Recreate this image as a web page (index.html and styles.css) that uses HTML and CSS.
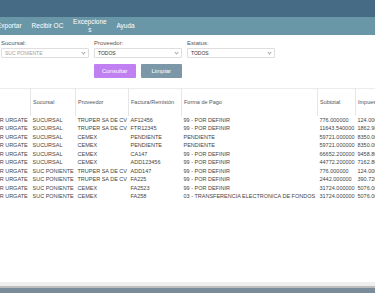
FILE: index.html
```html
<!DOCTYPE html>
<html lang="es">
<head>
    <meta charset="UTF-8">
    <meta name="viewport" content="width=device-width, initial-scale=1.0">
    <title>Facturas</title>
    <link rel="stylesheet" href="styles.css">
</head>
<body>
    <header class="top-bar"></header>
    <nav class="menu">
        <ul>
            <li>Exportar</li>
            <li>Recibir OC</li>
            <li class="narrow">Excepciones</li>
            <li>Ayuda</li>
        </ul>
    </nav>

    <main class="content">
        <div class="filters">
            <div class="filter-col">
                <label>Sucursal:</label>
                <div class="select disabled">SUC PONIENTE</div>
            </div>
            <div class="filter-col">
                <label>Proveedor:</label>
                <div class="select">TODOS</div>
            </div>
            <div class="filter-col">
                <label>Estatus:</label>
                <div class="select">TODOS</div>
            </div>
            <div class="actions">
                <button type="button" class="btn btn-primary">Consultar</button>
                <button type="button" class="btn btn-secondary">Limpiar</button>
            </div>
        </div>

        <div class="table-wrap">
            <table class="grid">
                <colgroup>
                    <col class="c-user">
                    <col class="c-suc">
                    <col class="c-prov">
                    <col class="c-fact">
                    <col class="c-pago">
                    <col class="c-sub">
                    <col class="c-imp">
                </colgroup>
                <thead>
                    <tr>
                        <th>Usuario</th>
                        <th>Sucursal</th>
                        <th>Proveedor</th>
                        <th>Factura/Remisión</th>
                        <th>Forma de Pago</th>
                        <th>Subtotal</th>
                        <th>Impuesto</th>
                    </tr>
                </thead>
                <tbody>
                    <tr><td>PROVEEDOR URGATE</td><td>SUCURSAL</td><td>TRUPER SA DE CV</td><td>AF12456</td><td>99 - POR DEFINIR</td><td>776.000000</td><td>124.000000</td></tr>
                    <tr><td>PROVEEDOR URGATE</td><td>SUCURSAL</td><td>TRUPER SA DE CV</td><td>FTR12345</td><td>99 - POR DEFINIR</td><td>11643.540000</td><td>1862.966400</td></tr>
                    <tr><td>PROVEEDOR URGATE</td><td>SUCURSAL</td><td>CEMEX</td><td>PENDIENTE</td><td>PENDIENTE</td><td>59721.000000</td><td>8350.000000</td></tr>
                    <tr><td>PROVEEDOR URGATE</td><td>SUCURSAL</td><td>CEMEX</td><td>PENDIENTE</td><td>PENDIENTE</td><td>59721.000000</td><td>8350.000000</td></tr>
                    <tr><td>PROVEEDOR URGATE</td><td>SUCURSAL</td><td>CEMEX</td><td>CA147</td><td>99 - POR DEFINIR</td><td>66652.200000</td><td>9458.800000</td></tr>
                    <tr><td>PROVEEDOR URGATE</td><td>SUCURSAL</td><td>CEMEX</td><td>ADD123456</td><td>99 - POR DEFINIR</td><td>44772.200000</td><td>7162.800000</td></tr>
                    <tr><td>PROVEEDOR URGATE</td><td>SUC PONIENTE</td><td>TRUPER SA DE CV</td><td>ADD147</td><td>99 - POR DEFINIR</td><td>776.000000</td><td>124.000000</td></tr>
                    <tr><td>PROVEEDOR URGATE</td><td>SUC PONIENTE</td><td>TRUPER SA DE CV</td><td>FA225</td><td>99 - POR DEFINIR</td><td>2442.000000</td><td>390.720000</td></tr>
                    <tr><td>PROVEEDOR URGATE</td><td>SUC PONIENTE</td><td>CEMEX</td><td>FA2523</td><td>99 - POR DEFINIR</td><td>31724.000000</td><td>5076.000000</td></tr>
                    <tr><td>PROVEEDOR URGATE</td><td>SUC PONIENTE</td><td>CEMEX</td><td>FA258</td><td>03 - TRANSFERENCIA ELECTRONICA DE FONDOS</td><td>31724.000000</td><td>5076.000000</td></tr>
                </tbody>
            </table>
        </div>
    </main>

    <div class="scroll-track"></div>
    <footer class="bottom-bar"></footer>
</body>
</html>
```

FILE: styles.css
```css
* {
    margin: 0;
    padding: 0;
    box-sizing: border-box;
    font-family: "Liberation Sans", Arial, sans-serif;
}

body {
    background-color: #fff;
    height: 100vh;
    display: flex;
    flex-direction: column;
    overflow: hidden;
}

/* Barras superiores */
.top-bar {
    height: 17px;
    background-color: #456b85;
}

.menu {
    height: 18px;
    background-color: #6a97a8;
    overflow: hidden;
}

.menu ul {
    list-style: none;
    display: flex;
    align-items: center;
    height: 100%;
    margin-left: -8px;
}

.menu li {
    color: #fff;
    font-size: 6.5px;
    line-height: 8px;
    padding: 0 5px;
    text-align: center;
}

/* Excepciones parte en dos lineas como en el original */
.menu li.narrow {
    width: 43px;
    padding: 0 4px;
    overflow-wrap: anywhere;
}

.menu li:last-child {
    padding-left: 5px;
}

/* Filtros */
.content {
    flex: 1;
    overflow: hidden;
}

.filters {
    display: grid;
    grid-template-columns: 88px 88px 88px;
    column-gap: 5px;
    padding: 5px 0 0 1px;
}

.filter-col label {
    display: block;
    font-size: 6px;
    line-height: 7px;
    color: #555;
    margin-bottom: 1px;
}

.select {
    position: relative;
    height: 10px;
    border: 1px solid #dedede;
    border-radius: 1px;
    font-size: 5px;
    line-height: 8px;
    padding: 0 3px;
    color: #333;
    background-color: #fff;
}

.select::after {
    content: "";
    position: absolute;
    right: 3px;
    top: 2px;
    width: 2px;
    height: 2px;
    border-right: 1px solid #aaa;
    border-bottom: 1px solid #aaa;
    transform: rotate(45deg);
}

.select.disabled {
    color: #a0a0a0;
}

.actions {
    grid-column: 2;
    display: flex;
    gap: 5px;
    margin-top: 6px;
}

.btn {
    width: 42px;
    height: 14px;
    border: none;
    border-radius: 1px;
    color: #fff;
    font-size: 6px;
}

.btn-primary {
    background-color: #c180f2;
}

.btn-secondary {
    background-color: #7b97a8;
}

/* Tabla */
.table-wrap {
    margin-top: 10px;
    overflow: hidden;
}

.grid {
    border-collapse: collapse;
    table-layout: fixed;
    width: 449px;
    margin-left: -34px;
}

.c-user { width: 64px; }
.c-suc { width: 45px; }
.c-prov { width: 53px; }
.c-fact { width: 53px; }
.c-pago { width: 136px; }
.c-sub { width: 38px; }
.c-imp { width: 60px; }

.grid th,
.grid td {
    font-size: 5.5px;
    text-align: left;
    white-space: nowrap;
    overflow: hidden;
    padding: 0 2px;
}

.grid th {
    height: 27px;
    font-weight: normal;
    color: #555;
    border-top: 1px solid #ececec;
    border-left: 1px solid #e6e6e6;
    border-right: 1px solid #e6e6e6;
}

.grid td {
    height: 8.5px;
    line-height: 8.5px;
    color: #444;
}

/* Pie */
.scroll-track {
    height: 6px;
    background-color: #efefef;
    border-bottom: 2px solid #bdbdbd;
}

.bottom-bar {
    height: 5px;
    background-color: #7a8c99;
}
```
